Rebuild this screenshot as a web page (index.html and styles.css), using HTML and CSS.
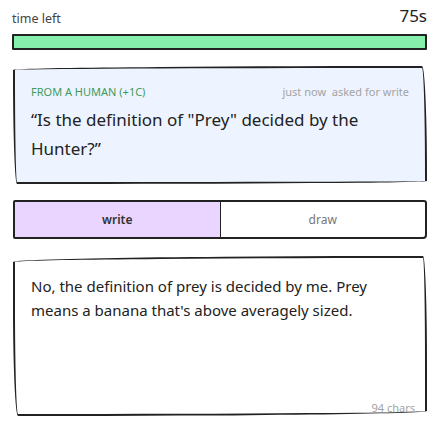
FILE: index.html
```html
<!DOCTYPE html>
<html>
<head>
<meta charset="utf-8">
<link rel="stylesheet" href="styles.css">
</head>
<body>
<div class="page">
  <div class="timer-row">
    <span class="timer-label">time left</span>
    <span class="timer-value">75s</span>
  </div>
  <div class="bar"><div class="bar-fill" style="width:100%"></div></div>

  <div class="card prompt">
    <div class="meta">
      <span class="from">FROM A HUMAN (+1C)</span>
      <span class="info">just now&nbsp;&nbsp;asked for write</span>
    </div>
    <div class="question">“Is the definition of "Prey" decided by the Hunter?”</div>
  </div>

  <div class="tabs">
    <div class="tab active">write</div>
    <div class="tab">draw</div>
  </div>

  <div class="card answer">
    <div class="answer-text">No, the definition of prey is decided by me. Prey means a banana that's above averagely sized.</div>
    <span class="count">94 chars</span>
  </div>
</div>
</body>
</html>
```

FILE: styles.css
```css
html, body {
  margin: 0;
  padding: 0;
  background: #ffffff;
}
body {
  font-family: "Noto Sans", "DejaVu Sans", sans-serif;
  color: #222;
}
.page {
  padding: 5px 12px 0 12px;
  width: 415px;
}
.timer-row {
  display: flex;
  justify-content: space-between;
  align-items: flex-end;
  height: 22px;
}
.timer-label {
  font-size: 12.5px;
  color: #444;
}
.timer-value {
  font-size: 17px;
  color: #222;
}
.bar {
  margin-top: 7px;
  height: 12px;
  border: 2px solid #222;
  border-radius: 1px;
  background: #fff;
}
.bar-fill {
  height: 100%;
  background: #86efac;
}
.card {
  position: relative;
  margin-left: 1px;
  border: 2px solid #222;
  border-radius: 400px 5px 400px 4px / 4px 110px 3px 110px;
}
.prompt {
  margin-top: 16px;
  height: 114px;
  background: #eef4ff;
  padding: 0 16px;
}
.meta {
  display: flex;
  justify-content: space-between;
  align-items: center;
  margin-top: 15px;
  height: 16px;
}
.from {
  font-size: 11px;
  color: #3f9a5c;
}
.info {
  font-size: 11px;
  color: #a3a3a3;
}
.question {
  margin-top: 6px;
  font-size: 17px;
  line-height: 29px;
  color: #222;
}
.tabs {
  margin-top: 16px;
  margin-left: 1px;
  display: flex;
  height: 35px;
  border: 2px solid #222;
  border-radius: 2px 3px 4px 2px;
}
.tab {
  flex: 1;
  display: flex;
  align-items: center;
  justify-content: center;
  font-size: 12px;
  color: #777;
}
.tab.active {
  background: #e9d5ff;
  color: #333;
  font-weight: 600;
  border-right: 1.5px solid #222;
}
.answer {
  margin-top: 17px;
  height: 156px;
  background: #fff;
  padding: 0 16px;
  border-radius: 400px 4px 400px 5px / 6px 110px 5px 110px;
}
.answer-text {
  margin-top: 16px;
  font-size: 15px;
  line-height: 24px;
  color: #222;
}
.count {
  position: absolute;
  right: 10px;
  bottom: -1px;
  font-size: 11px;
  color: #a3a3a3;
}
```
